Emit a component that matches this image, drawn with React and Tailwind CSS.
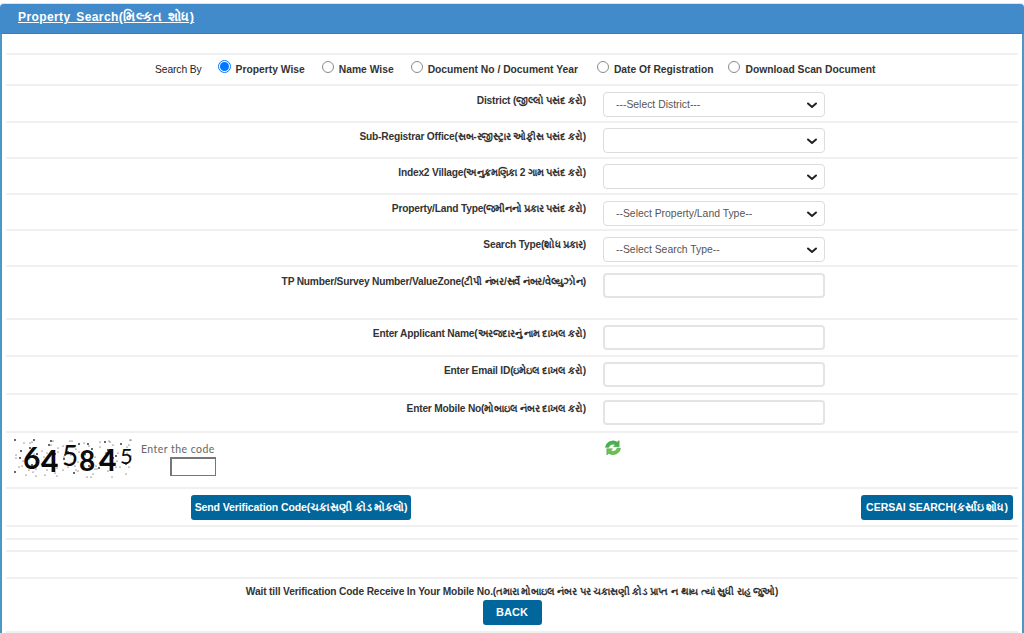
import React from "react";

function Row({ label, h, pt = "pt-[4px]", sel = "pt-[6px]", children }) {
  return (
    <div className={`flex border-b-2 border-[#f0f0f0] ${h}`}>
      <div className={`w-[580px] shrink-0 text-right text-[10.2px] leading-[20px] font-bold tracking-[-0.2px] text-[#333] ${pt}`}>{label}</div>
      <div className={`ml-[17px] ${sel}`}>{children}</div>
    </div>
  );
}

function Sel({ text }) {
  return (
    <div className="flex h-[25px] w-[222px] items-center justify-between rounded-[4px] border border-[#dcdcdc] bg-white pl-[12px] pr-[5px] text-[10.4px] text-[#555]">
      <span>{text}</span>
      <svg width="12" height="12" viewBox="0 0 12 12" fill="none" stroke="#222" strokeWidth="2" strokeLinecap="round" strokeLinejoin="round" className="mr-[1px]"><path d="M2 4.500 6 8l4-3.500" /></svg>
    </div>
  );
}

function Inp({ h = "h-[25px]" }) {
  return <div className={`${h} w-[222px] rounded-[4px] border-2 border-[#e4e4e4] bg-white`} />;
}

function Radio({ label, on, cls }) {
  return (
    <span className={`flex items-center ${cls}`}>
      {on ? (
        <span className="mr-[5px] -mt-[6px] flex h-[13px] w-[13px] items-center justify-center rounded-full border border-[#0075ff] bg-white">
          <span className="h-[9px] w-[9px] rounded-full bg-[#0075ff]" />
        </span>
      ) : (
        <span className="mr-[5px] -mt-[6px] h-[12px] w-[12px] rounded-full border border-[#8a8a8a] bg-white" />
      )}
      <span>{label}</span>
    </span>
  );
}

const dots = [];
for (let i = 0; i < 110; i++) {
  const x = (i * 47 + (i * i) % 13) % 118;
  const y = (i * 29 + (i * i) % 7) % 38;
  dots.push([x, y, i % 4 === 0 ? 0.9 : 0.55]);
}

export default function App() {
  return (
    <div className="h-[633px] w-[1024px] overflow-hidden bg-white font-['Liberation_Sans','Noto_Sans',sans-serif]">
      <div className="pt-[3px]">
        <div className="flex h-[30px] items-center rounded-t-[4px] border-t border-[#d4e6f3] bg-[#428bca] pb-[2px] pl-[18px] text-[12px] font-bold tracking-[0.4px] text-white">
          <span className="underline [word-spacing:2px]">Property Search<span className="text-[12.7px]">(મિલ્કત શોધ)</span></span>
        </div>
        <div className="h-[600px] border-x-2 border-t border-[#4a98c6] border-t-[#357ebd] px-[4px]">
          <div className="h-[21px] border-b-2 border-[#f0f0f0]" />
          <div className="flex h-[31px] items-center border-b-2 border-[#f0f0f0] pl-[149px] text-[10.3px] font-bold text-[#333]">
            <span className="mr-[16px] font-normal tracking-[-0.1px] text-[#222]">Search By</span>
            <Radio on label="Property Wise" cls="mr-[17px]" />
            <Radio label="Name Wise" cls="mr-[17px]" />
            <Radio label="Document No / Document Year" cls="mr-[19px]" />
            <Radio label="Date Of Registration" cls="mr-[15px]" />
            <Radio label="Download Scan Document" />
          </div>
          <Row h="h-[37px]" pt="pt-[5px]" label="District (જીલ્લો પસંદ કરો)"><Sel text="---Select District---" /></Row>
          <Row h="h-[36px]" sel="pt-[5px]" label="Sub-Registrar Office(સબ-રજીસ્ટ્રાર ઓફીસ પસંદ કરો)"><Sel text="" /></Row>
          <Row h="h-[36px]" sel="pt-[5px]" label="Index2 Village(અનુક્રમણિકા 2 ગામ પસંદ કરો)"><Sel text="" /></Row>
          <Row h="h-[36px]" label="Property/Land Type(જમીનનો પ્રકાર પસંદ કરો)"><Sel text="--Select Property/Land Type--" /></Row>
          <Row h="h-[36px]" label="Search Type(શોધ પ્રકાર)"><Sel text="--Select Search Type--" /></Row>
          <Row h="h-[53px]" pt="pt-[5px]" label="TP Number/Survey Number/ValueZone(ટીપી નંબર/સર્વે નંબર/વેલ્યુઝોન)"><Inp /></Row>
          <Row h="h-[37px]" sel="pt-[5px]" label="Enter Applicant Name(અરજદારનું નામ દાખલ કરો)"><Inp /></Row>
          <Row h="h-[38px]" sel="pt-[5px]" label="Enter Email ID(ઇમેઇલ દાખલ કરો)"><Inp /></Row>
          <Row h="h-[38px]" sel="pt-[5px]" label="Enter Mobile No(મોબાઇલ નંબર દાખલ કરો)"><Inp /></Row>
          <div className="flex h-[56px] border-b-2 border-[#f0f0f0]">
            <div className="ml-[9px] mt-[7px] h-[38px] w-[120px] shrink-0">
              <svg width="120" height="38" viewBox="0 0 120 38" overflow="visible">
                <g fill="#222">
                  {dots.map(([x, y, r], i) => (
                    <circle key={i} cx={x} cy={y} r={r} />
                  ))}
                </g>
                <g fontFamily="'Lato','Liberation Sans',sans-serif" fill="#0a0a0a">
                  <text x="8" y="29" fontSize="30" fontWeight="700">6</text>
                  <text x="26" y="32" fontSize="30" fontWeight="900">4</text>
                  <text x="47" y="26" fontSize="28" fontWeight="400">5</text>
                  <text x="64" y="31" fontSize="28" fontWeight="700">8</text>
                  <text x="84" y="31" fontSize="30" fontWeight="900">4</text>
                  <text x="105" y="24" fontSize="22" fontWeight="400">5</text>
                </g>
              </svg>
            </div>
            <div className="ml-[6px] mt-[10px] flex w-[75px] shrink-0 flex-col items-end">
              <span className="self-start text-[10.5px] leading-[13px] tracking-[0.45px] text-[#666] font-['Lato',sans-serif]">Enter the code</span>
              <div className="mt-[1px] h-[19px] w-[46px] border border-[#767676] border-t-2 border-l-2 bg-white" />
            </div>
            <div className="ml-[388px] mt-[6px]">
              <svg width="18" height="17" viewBox="0 0 18 17">
                <path d="M1.500 8.500a7.500 7 0 0 1 11.700-5.400l2-1.600v6.300H9.300l1.900-1.900A4 3.800 0 0 0 5 8.300z" fill="#4caf50" stroke="#3d9440" strokeWidth="0.4" />
                <path d="M16.500 9a7.500 7 0 0 1-11.700 5.400l-2 1.600V9.700h5.900l-1.900 1.900A4 3.800 0 0 0 13 9.200z" fill="#6cc24a" stroke="#3d9440" strokeWidth="0.4" />
              </svg>
            </div>
          </div>
          <div className="flex h-[38px] items-start border-b-2 border-[#f0f0f0] pt-[6px]">
            <button className="ml-[185px] h-[25px] w-[220px] rounded-[3px] bg-[#00669c] text-[10.5px] font-bold tracking-[-0.1px] text-white">Send Verification Code(ચકાસણી કોડ મોકલો)</button>
            <button className="ml-[450px] h-[25px] w-[152px] rounded-[3px] bg-[#00669c] text-[10.5px] font-bold text-white">CERSAI SEARCH(કર્સાઇ શોધ)</button>
          </div>
          <div className="h-[13px] border-b-2 border-[#f0f0f0]" />
          <div className="h-[12px] border-b-2 border-[#f0f0f0]" />
          <div className="h-[27px] border-b-2 border-[#f0f0f0]" />
          <div className="flex h-[54px] flex-col items-center border-b-2 border-[#f0f0f0] pt-[6px]">
            <div className="text-[10.2px] leading-[14px] font-bold tracking-[-0.14px] text-[#333]">Wait till Verification Code Receive In Your Mobile No.(તમારા મોબાઇલ નંબર પર ચકાસણી કોડ પ્રાપ્ત ન થાય ત્યાં સુધી રાહ જુઓ)</div>
            <button className="mt-[1px] h-[25px] w-[59px] rounded-[3px] bg-[#00669c] text-[11px] font-bold text-white">BACK</button>
          </div>
        </div>
      </div>
    </div>
  );
}
